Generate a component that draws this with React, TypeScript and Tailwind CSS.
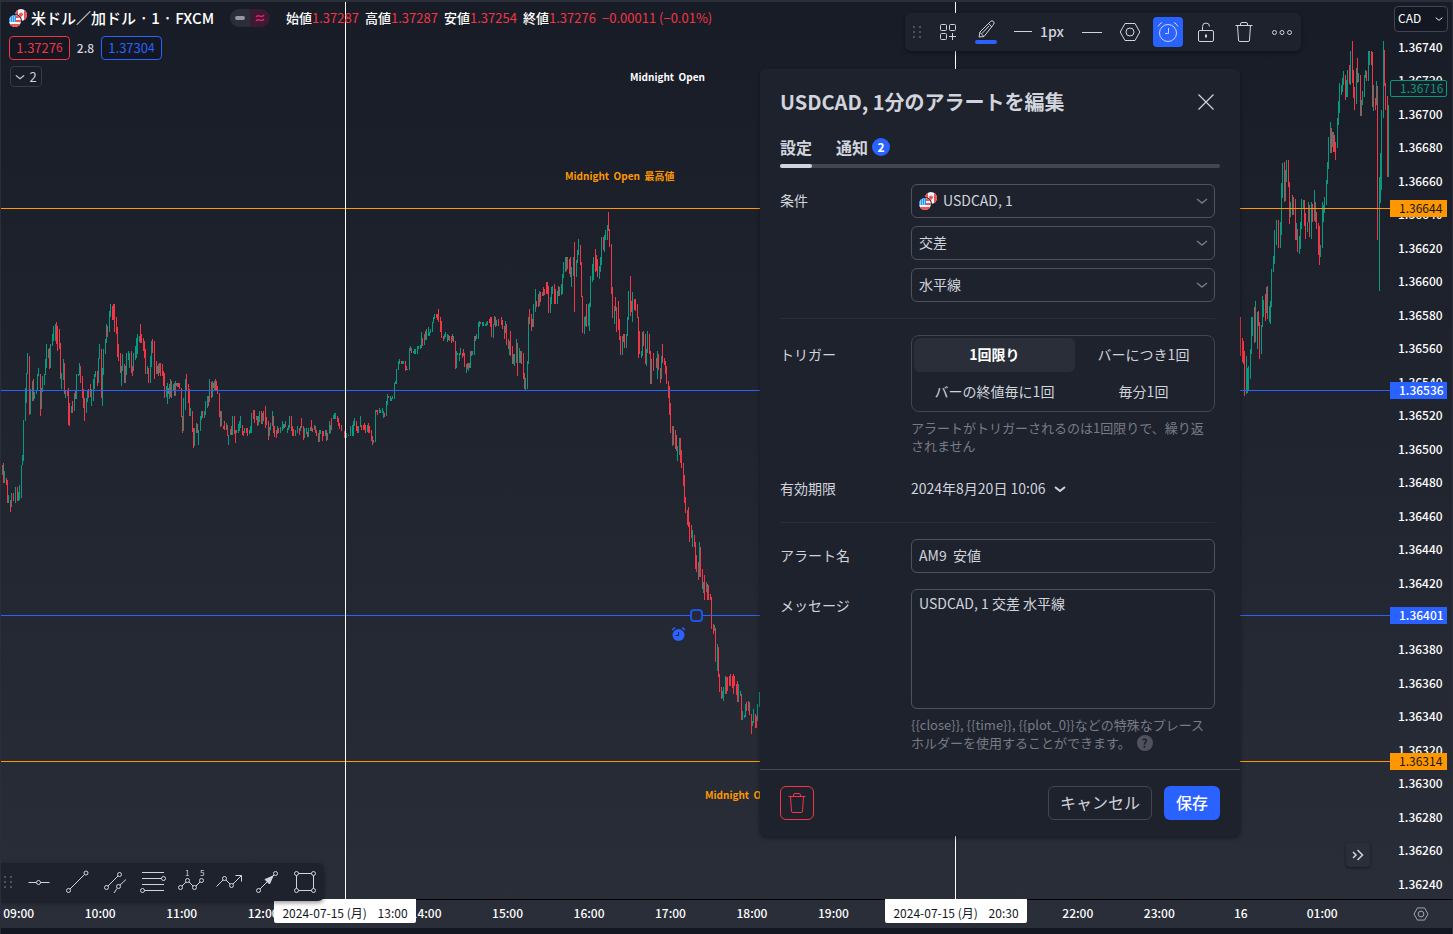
import { useState, type ReactNode } from "react";

// [x, high, low] of each one-minute bar
type Bar = [number, number, number];

const parseBars = (src: string): Bar[] =>
  src.trim().split(/\s+/).map((b) => b.split(",").map(Number) as Bar);

const UP_BARS = parseBars(`
2,465,475 4,471,483 8,495,503 11,493,507 15,487,503 18,492,501 19,485,500 21,465,498 22,455,465 23,420,461 25,388,421 26,373,403 27,353,374
30,389,414 32,381,401 34,392,399 36,390,394 37,374,391 38,368,376 41,388,409 42,376,392 44,374,385 45,359,375 46,344,368 48,349,358 50,344,368
52,334,346 53,326,341 55,324,341 61,373,389 63,359,380 65,391,398 71,406,413 74,393,411 76,374,399 78,374,376 79,363,375 86,398,413 87,391,402
91,389,406 93,379,401 94,374,389 95,371,377 98,358,383 99,344,359 102,368,406 103,349,375 105,339,354 106,324,343 109,311,332 110,304,317
121,366,386 122,354,371 125,366,383 126,353,375 128,351,360 129,353,368 133,353,371 135,346,360 136,338,358 137,334,354 139,336,342 147,366,374
150,356,383 151,341,367 157,366,374 159,363,373 166,386,397 167,383,404 169,384,399 170,379,397 173,384,390 175,381,396 177,383,387 183,398,431
185,379,410 190,408,416 194,428,446 196,423,433 198,430,445 200,416,431 201,411,420 204,411,418 205,401,415 207,396,408 209,379,402 212,381,397
214,381,390 221,411,426 226,423,430 228,435,445 230,429,435 232,416,435 236,430,433 238,424,433 239,421,431 240,416,428 244,428,433 249,430,434
250,426,433 251,413,433 256,416,420 258,416,425 259,411,422 262,413,424 269,427,436 270,423,430 272,411,426 277,426,434 280,427,433 282,421,431
283,424,429 285,421,427 287,428,433 288,425,430 289,416,428 295,430,436 297,426,433 300,426,431 304,428,438 306,428,434 308,428,437 310,427,431
314,425,430 319,430,442 320,430,434 325,430,436 327,433,440 329,421,434 330,425,433 333,415,419 334,413,419 335,413,419 345,435,438 346,433,438
348,435,436 350,426,436 352,425,436 353,421,436 354,418,426 358,426,433 360,416,427 367,425,432 373,440,443 375,410,442 379,408,413 380,410,413
382,408,413 383,411,418 386,401,416 387,394,405 390,396,401 391,398,401 392,396,399 394,383,399 395,381,384 396,369,384 398,361,370 399,359,364
402,361,364 403,361,364 407,369,370 409,348,370 410,346,351 413,351,353 414,349,354 415,349,354 417,346,354 418,346,349 420,345,349 421,332,348
424,334,345 426,329,340 428,327,336 429,332,336 430,329,333 432,322,332 433,317,323 434,314,319 444,334,339 445,332,337 447,334,342 449,336,341
452,334,341 456,351,368 457,353,355 459,353,361 460,348,355 466,364,373 468,363,371 470,351,368 472,351,355 474,336,355 476,334,339 478,322,339
479,321,327 482,322,326 483,322,326 485,324,326 486,322,326 487,321,325 493,324,338 494,316,325 496,320,326 505,321,333 509,341,355 513,354,364
514,354,366 516,339,363 519,348,363 520,351,363 525,378,390 527,361,389 528,317,364 533,304,327 535,289,312 539,291,306 542,292,296 550,297,313
551,287,304 552,286,294 557,291,304 559,287,296 561,284,295 562,274,294 563,262,278 565,257,272 567,257,269 571,267,287 573,257,276 576,260,277
577,250,263 578,239,255 584,317,334 585,316,326 588,304,326 589,303,331 590,276,307 592,264,282 593,257,280 599,266,279 600,257,272 601,237,265
604,235,252 605,230,240 607,225,240 614,306,324 622,336,355 626,334,348 627,317,336 628,291,320 632,292,322 641,351,358 642,332,356 646,349,366
647,331,353 651,359,384 657,351,379 661,356,379 672,426,446 677,446,461 679,438,455 692,530,547 699,542,577 703,582,593 706,582,592 714,625,631
717,644,671 722,691,698 723,687,701 725,676,694 738,684,702 740,691,696 742,711,720 744,715,718 745,704,717 748,701,711 752,721,726 753,709,723
757,704,721 759,692,707
1246,356,394 1247,368,393 1248,366,390 1250,349,379 1251,317,354 1252,317,336 1255,301,342 1257,312,349 1261,325,354 1262,296,327 1263,300,317
1266,287,313 1269,306,322 1270,301,324 1271,269,307 1273,256,272 1274,230,264 1276,220,245 1280,222,248 1281,183,235 1282,163,198 1285,170,201
1286,160,182 1290,202,217 1293,197,215 1296,223,240 1299,236,254 1300,222,249 1301,199,229 1303,200,209 1307,222,232 1308,202,222 1311,202,239
1314,190,221 1320,245,257 1322,202,248 1323,205,222 1324,197,213 1326,180,205 1327,162,184 1328,137,169 1330,122,153 1332,132,147 1337,118,148
1338,101,125 1339,83,113 1341,85,95 1342,78,92 1343,71,85 1346,80,97 1347,70,97 1350,51,85 1356,68,104 1358,73,82 1361,100,116 1362,91,105
1364,75,97 1365,70,78 1368,51,81 1369,51,65 1373,85,111 1376,81,105 1379,177,291 1380,153,203 1381,110,190 1383,41,118 1388,105,177`);

const DOWN_BARS = parseBars(`
3,463,483 6,478,485 7,480,503 10,500,512 13,493,501 17,487,501 29,356,415 33,379,401 40,374,416 49,348,369 56,322,344 57,326,351 59,329,349
60,343,379 64,363,394 67,391,396 68,388,425 69,403,426 72,401,413 75,391,399 80,366,383 82,376,398 83,389,408 84,398,421 88,389,398 90,384,397
97,371,386 101,349,398 107,326,337 112,306,320 113,304,320 114,304,332 116,317,334 117,327,357 118,344,361 120,353,373 124,364,383 131,351,373
132,366,376 140,324,343 141,334,343 143,338,351 144,341,358 145,349,374 148,368,383 152,339,353 154,341,379 156,361,374 158,364,376 160,363,376
162,364,376 163,371,386 164,373,398 168,388,394 171,381,398 174,383,396 176,383,386 178,383,387 179,383,389 181,388,417 182,416,433 186,374,391
188,384,403 189,389,416 192,411,432 193,428,448 197,424,433 202,411,418 208,396,406 211,382,398 213,383,388 215,379,391 216,381,391 217,386,394
219,393,417 220,411,427 223,426,429 224,421,430 227,425,436 231,426,435 234,416,434 235,430,443 242,425,435 243,431,436 246,428,433 247,428,436
253,410,419 254,410,423 257,416,426 261,411,424 263,411,421 265,406,428 266,417,425 268,421,440 273,416,433 274,426,437 276,430,438 278,428,433
284,424,428 291,416,431 292,426,436 293,429,436 299,428,435 301,418,428 303,426,440 307,432,437 311,420,431 312,428,432 315,426,433 316,430,436
318,433,442 322,431,441 323,431,436 326,430,441 331,418,430 337,416,422 338,418,426 339,423,429 341,425,431 344,431,438 356,421,431 357,426,433
361,425,430 363,425,430 364,423,430 365,425,433 368,423,433 369,426,433 371,430,441 372,436,445 376,410,412 377,410,415 384,413,417 388,396,398
401,361,364 405,361,371 406,366,370 411,348,353 422,338,346 425,331,340 436,314,318 437,314,320 438,309,322 440,317,332 441,321,338 443,336,341
448,335,340 451,336,343 453,336,342 455,341,369 462,353,358 463,349,356 464,353,367 467,363,369 469,363,368 471,351,356 475,336,341 480,322,324
489,319,323 490,317,327 491,317,337 495,317,327 498,319,326 501,317,325 502,320,329 504,326,339 506,324,345 508,339,349 510,331,356 512,346,364
517,343,376 521,351,364 523,353,379 524,373,389 529,309,324 531,314,331 532,319,327 536,301,307 538,294,307 540,292,302 543,287,296 544,289,295
546,282,294 547,282,294 548,286,313 554,284,304 555,289,304 558,286,296 566,257,271 569,259,274 570,257,277 574,242,312 580,245,265 581,262,297
582,296,333 586,304,327 595,249,272 596,255,271 597,259,277 603,237,250 608,212,231 609,229,247 611,244,294 612,287,318 615,297,311 616,307,332
618,301,330 619,319,340 620,336,355 623,334,342 624,334,348 630,276,316 631,301,312 634,299,310 635,299,311 637,304,318 638,317,358 639,331,354
643,331,346 645,334,364 649,334,354 650,351,384 653,353,371 656,358,368 658,354,370 660,368,383 662,344,363 664,358,365 665,361,374 666,366,384
668,381,398 669,386,415 670,403,433 673,426,445 675,430,449 676,435,451 680,438,463 681,450,468 683,463,486 684,475,503 685,497,513 687,510,525
688,507,527 689,522,542 691,525,538 694,535,547 695,542,569 696,555,572 698,562,580 700,547,577 702,569,589 704,575,600 707,584,600 708,585,600
710,594,600 711,597,629 713,624,634 715,628,662 718,647,677 719,674,692 721,687,699 726,677,694 727,677,691 729,676,686 730,674,686 732,676,688
733,674,694 734,676,686 736,684,695 737,681,702 741,694,720 746,702,711 749,702,715 751,714,734 755,714,728 756,716,728
1240,317,356 1242,338,362 1243,341,364 1244,351,396 1254,307,343 1258,311,326 1259,322,359 1265,294,321 1267,286,319 1278,220,248 1284,162,202
1288,160,187 1289,182,224 1292,195,215 1295,199,240 1297,229,252 1304,200,226 1305,213,239 1309,205,237 1312,204,222 1315,202,222 1316,212,229
1318,223,255 1319,226,265 1331,128,153 1333,132,152 1334,135,152 1335,142,160 1345,75,100 1349,65,84 1352,41,83 1353,70,98 1354,87,110 1357,58,83
1360,75,116 1366,71,81 1371,51,65 1372,52,107 1375,98,110 1377,86,240 1384,50,86 1385,83,110 1387,96,177`);

const barPath = (bars: Bar[]) => bars.map(([x, hi, lo]) => `M${x + 0.5} ${hi}V${lo}`).join("");

const PRICES = Array.from({ length: 26 }, (_, i) => (1.3674 - i * 0.0002).toFixed(5));

const TIMES = [
  "09:00", "10:00", "11:00", "12:00", "13:00", "14:00", "15:00", "16:00", "17:00",
  "18:00", "19:00", "20:00", "21:00", "22:00", "23:00", "16", "01:00",
];

const OHLC = [
  { label: "始値", value: "1.37287" },
  { label: "高値", value: "1.37287" },
  { label: "安値", value: "1.37254" },
  { label: "終値", value: "1.37276" },
];

const TRIGGERS = ["1回限り", "バーにつき1回", "バーの終値毎に1回", "毎分1回"];

function Icon({ children, size = 28 }: { children: ReactNode; size?: number }) {
  return (
    <svg width={size} height={size} viewBox="0 0 28 28" fill="none" stroke="currentColor" aria-hidden="true" className="shrink-0 overflow-visible">
      {children}
    </svg>
  );
}

function Chevron({ className }: { className?: string }) {
  return (
    <svg width="12" height="8" viewBox="0 0 12 8" fill="none" stroke="currentColor" strokeWidth="1.400" aria-hidden="true" className={className}>
      <path d="M1 2l5 4 5-4" />
    </svg>
  );
}

function Flags() {
  return (
    <svg width="18" height="18" viewBox="0 0 18 18" aria-hidden="true" className="shrink-0">
      <defs>
        <clipPath id="ca"><circle cx="12" cy="6" r="6" /></clipPath>
        <clipPath id="us"><circle cx="6" cy="12" r="6" /></clipPath>
      </defs>
      <g clipPath="url(#ca)">
        <rect x="6" width="12" height="12" fill="#f0f3fa" />
        <path d="M6 0h3v12H6zM15 0h3v12h-3z" fill="#ef5350" />
        <path d="M12 3l1 1.500 1.200-.3-.4 2L12 8l-1.800-1.800-.4-2 1.200.3z" fill="#ef5350" />
      </g>
      <circle cx="6" cy="12" r="7" fill="#1e222d" />
      <g clipPath="url(#us)">
        <rect y="6" width="12" height="12" fill="#f0f3fa" />
        <path d="M0 7h12v2H0zM0 11h12v2H0zM0 15h12v3H0z" fill="#ef5350" />
        <rect y="6" width="7" height="7" fill="#2196f3" />
        <path d="M1 8h1M3 8h1M5 8h1M1 10h1M3 10h1M5 10h1M1 12h1M3 12h1M5 12h1" stroke="#fff" />
      </g>
    </svg>
  );
}

function TrashIcon() {
  return (
    <Icon>
      <path d="M5.500 7.500h17M10.500 7.500V6a1.500 1.500 0 0 1 1.500-1.500h4A1.500 1.500 0 0 1 17.500 6v1.500M7.500 7.500l1 14.500a1.500 1.500 0 0 0 1.500 1.500h8a1.500 1.500 0 0 0 1.500-1.500l1-14.500" />
    </Icon>
  );
}

function Grip() {
  return (
    <svg width="10" height="14" viewBox="0 0 10 14" fill="#50535e" aria-hidden="true">
      <path d="M1 1h2v2H1zM7 1h2v2H7zM1 6h2v2H1zM7 6h2v2H7zM1 11h2v2H1zM7 11h2v2H7z" />
    </svg>
  );
}

function HexIcon({ size }: { size?: number }) {
  return (
    <Icon size={size}>
      <path d="M9 5.500h10l4.800 8.500-4.800 8.500H9L4.200 14z" />
      <circle cx="14" cy="14" r="4" />
    </Icon>
  );
}

const TOOLS: { label: string; icon: ReactNode }[] = [
  { label: "水平線", icon: <><path d="M3.500 14.500h8M15.500 14.500h9" /><circle cx="13.500" cy="14.500" r="2" /></> },
  { label: "トレンドライン", icon: <><path d="M7 21L21.500 6.500" /><circle cx="5.500" cy="22.500" r="2" /><circle cx="23" cy="5" r="2" /></> },
  {
    label: "平行チャネル",
    icon: <><path d="M7 18L17 8M13 25l3-4.500M19 17l6-5.500" /><circle cx="5.500" cy="19.500" r="2" /><circle cx="18.500" cy="6.500" r="2" /><circle cx="17.500" cy="18.500" r="2" /></>,
  },
  {
    label: "フィボナッチ",
    icon: <><path d="M3 4.500h22M3 10.500h19.500M3 16.500h22M5.500 22.500H25" /><circle cx="24.500" cy="10.500" r="2" /><circle cx="3.500" cy="22.500" r="2" /></>,
  },
  {
    label: "エリオット波動",
    icon: (
      <>
        <path d="M5 18l4-4M12 14l4 4M19 18l4-4" />
        <circle cx="3.500" cy="19.500" r="2" /><circle cx="10.500" cy="12.500" r="2" /><circle cx="17.500" cy="19.500" r="2" /><circle cx="24.500" cy="12.500" r="2" />
        <text x="8" y="8" fontSize="8" fill="currentColor" stroke="none">1</text>
        <text x="23" y="8" fontSize="8" fill="currentColor" stroke="none">5</text>
      </>
    ),
  },
  {
    label: "パス",
    icon: <><path d="M1.500 18.500L8 12M11 12l4 4M18 16l8.500-8.500M20.500 7.500h6v6" /><circle cx="9.500" cy="10.500" r="2" /><circle cx="16.500" cy="17.500" r="2" /></>,
  },
  {
    label: "矢印",
    icon: <><path d="M7 21l8-8M19 9l2-2" /><path d="M20 8l-8 3.500 4.500 4.500z" fill="currentColor" /><circle cx="5.500" cy="22.500" r="2" /><circle cx="22.500" cy="5.500" r="2" /></>,
  },
  {
    label: "長方形",
    icon: (
      <>
        <path d="M7.500 5.500h13M7.500 22.500h13M5.500 7.500v13M22.500 7.500v13" />
        <circle cx="5.500" cy="5.500" r="2" /><circle cx="22.500" cy="5.500" r="2" /><circle cx="5.500" cy="22.500" r="2" /><circle cx="22.500" cy="22.500" r="2" />
      </>
    ),
  },
];

function ChartCanvas() {
  return (
    <svg className="absolute inset-0 h-full w-full" aria-hidden="true">
      <g transform="translate(-1 -2)" shapeRendering="crispEdges" fill="none">
        <path d={barPath(UP_BARS)} stroke="#089981" />
        <path d={barPath(DOWN_BARS)} stroke="#f23645" />
        <path d="M0 208.500H1390M0 761.500H1390" stroke="#ff9800" />
        <path d="M0 390.500H1390M0 615.500H1390" stroke="#2962ff" />
        <path d="M345.500 0V900M955.500 0V900" stroke="#ffffff" />
      </g>
      <g transform="translate(-1 -2)" className="text-[10px] font-bold">
        <text x="630" y="81" fill="#ffffff" className="whitespace-pre">Midnight  Open</text>
        <text x="565" y="180" fill="#ff9800" className="whitespace-pre">Midnight  Open  最高値</text>
        <text x="705" y="799" fill="#ff9800" className="whitespace-pre">Midnight  Open  最安値</text>
        <rect x="691" y="610" width="11" height="11" rx="3" fill="#262a35" stroke="#1e53e5" strokeWidth="2" />
        <circle cx="678.500" cy="635" r="6" fill="#2962ff" />
        <path d="M672 630l3-2.500M685 630l-3-2.500" stroke="#2962ff" strokeWidth="1.500" />
        <path d="M678.500 632v3.500h-3" fill="none" stroke="#1e222d" />
      </g>
    </svg>
  );
}

function Legend() {
  return (
    <div className="relative ml-2 flex flex-col items-start pt-1">
      <div className="flex h-[26px] items-center whitespace-nowrap pb-[2px]">
        <Flags />
        <h1 className="ml-1 w-[184px] text-[15px] font-medium text-white">米ドル／加ドル · 1 · FXCM</h1>
        <div className="ml-[15px] flex h-[18px] w-10 overflow-hidden rounded-full">
          <span className="flex flex-1 items-center justify-center bg-[#2a2e39]">
            <span className="h-1 w-[10px] rounded-full bg-[#9598a1]" />
          </span>
          <span className="flex flex-1 items-center justify-center bg-[#3b1a33] text-[#e91e63]">
            <svg width="10" height="8" viewBox="0 0 10 8" fill="none" stroke="currentColor" strokeWidth="1.500" aria-hidden="true">
              <path d="M1 3q2-2 4-.8T9 1M1 7q2-2 4-.8T9 5" />
            </svg>
          </span>
        </div>
        <dl className="ml-4 flex text-[13px]">
          {OHLC.map(({ label, value }) => (
            <div key={label} className="flex w-[79px]">
              <dt className="font-medium text-white">{label}</dt>
              <dd className="text-[#f23645]">{value}</dd>
            </div>
          ))}
        </dl>
        <span className="text-[13px] text-[#f23645]">−0.00011 (−0.01%)</span>
      </div>
      <div className="mt-1 flex h-6 items-center text-[13px]">
        <button type="button" className="h-6 w-[61px] rounded border border-[#f23645] bg-[#131722] leading-5 text-[#f23645]">
          1.3727<span className="relative -top-px text-[12px]">6</span>
        </button>
        <span className="w-[31px] text-center text-[12px] font-medium text-[#d1d4dc]">2.8</span>
        <button type="button" className="h-6 w-[61px] rounded border border-[#2962ff] bg-[#131722] leading-5 text-[#2962ff]">
          1.3730<span className="relative -top-px text-[12px]">4</span>
        </button>
      </div>
      <button type="button" className="ml-px mt-[6px] flex h-[21px] w-8 items-center justify-center gap-1 rounded-sm border border-[#363a45] text-[13px] text-[#d1d4dc]">
        <Chevron className="w-[10px]" />2
      </button>
    </div>
  );
}

function LineToolbar() {
  const btn = "flex h-[30px] w-[38px] items-center justify-center";
  return (
    <div className="absolute left-[904px] top-[11px] flex h-[38px] items-center rounded-md bg-[#1e222d] text-[#d1d4dc] shadow-[0_2px_4px_rgba(0,0,0,0.4)]">
      <span className="flex w-6 justify-center"><Grip /></span>
      <button type="button" aria-label="テンプレート" className={btn}>
        <Icon>
          <rect x="6.500" y="6.500" width="6" height="6" rx="1" /><rect x="15.500" y="6.500" width="6" height="6" rx="1" />
          <rect x="6.500" y="15.500" width="6" height="6" rx="1" /><path d="M18.500 15v7M15 18.500h7" />
        </Icon>
      </button>
      <button type="button" aria-label="線の色" className="flex h-[30px] w-[38px] flex-col items-center justify-center">
        <svg width="20" height="20" viewBox="0 0 20 20" fill="none" stroke="currentColor" aria-hidden="true">
          <path d="M3 17l1-5L14.500 1.500a2 2 0 0 1 3 3L8 16.500l-5 .5zM4 12.500l3.500 3.500M12.500 3.500L16 7M6 13.500l7-7.500" />
        </svg>
        <span className="h-1 w-[22px] rounded-full bg-[#2962ff]" />
      </button>
      <button type="button" className="flex h-[30px] w-[68px] items-center justify-center gap-2 pb-[2px] text-[14px] font-medium">
        <span className="h-px w-[18px] bg-current" />1px
      </button>
      <button type="button" aria-label="線のスタイル" className={btn}><span className="h-px w-5 bg-current" /></button>
      <button type="button" aria-label="設定" className={btn}><HexIcon /></button>
      <button type="button" aria-label="アラート" className={btn}>
        <span className="flex h-[30px] w-[30px] items-center justify-center rounded bg-[#2962ff]">
          <Icon>
            <circle cx="14" cy="15" r="8.500" />
            <path d="M14.500 10v5.500H11M4 8.500a9 9 0 0 1 4-4M24 8.500a9 9 0 0 0-4-4" />
          </Icon>
        </span>
      </button>
      <button type="button" aria-label="ロック" className={btn}>
        <Icon>
          <rect x="6.500" y="12.500" width="15" height="11" rx="1.500" />
          <path d="M10.500 12.500V8.500a3.500 3.500 0 0 1 7 0" /><path d="M14 16.500v3" strokeWidth="2" />
        </Icon>
      </button>
      <button type="button" aria-label="削除" className={btn}><TrashIcon /></button>
      <button type="button" aria-label="その他" className={btn}>
        <Icon><circle cx="6.500" cy="14.500" r="2" /><circle cx="14" cy="14.500" r="2" /><circle cx="21.500" cy="14.500" r="2" /></Icon>
      </button>
    </div>
  );
}

function DrawingToolbar() {
  return (
    <div className="absolute -bottom-[2px] -left-px z-20 flex h-[38px] items-center rounded-r-md bg-[#1e222d] text-[#d1d4dc] shadow-[0_2px_4px_rgba(0,0,0,0.4)]">
      <span className="flex w-5 pl-[3px]"><Grip /></span>
      {TOOLS.map(({ label, icon }) => (
        <button key={label} type="button" aria-label={label} className="flex h-[30px] w-[38px] items-center justify-center">
          <Icon>{icon}</Icon>
        </button>
      ))}
    </div>
  );
}

function SelectBox({ label, value, icon }: { label: string; value: string; icon?: ReactNode }) {
  return (
    <div className="flex h-[34px] items-center rounded-md border border-[#50535e] pl-[7px]">
      {icon && <span className="mr-[6px]">{icon}</span>}
      <select aria-label={label} className="h-full min-w-0 flex-1 appearance-none bg-transparent pb-[2px] text-[14px] outline-none">
        <option>{value}</option>
      </select>
      <Chevron className="mr-[6px] shrink-0 text-[#787b86]" />
    </div>
  );
}

function AlertDialog() {
  const [trigger, setTrigger] = useState(TRIGGERS[0]);
  const [name, setName] = useState("AM9  安値");
  const [message, setMessage] = useState("USDCAD, 1 交差 水平線");

  return (
    <section
      role="dialog"
      aria-labelledby="alert-title"
      className="absolute left-[759px] top-[67px] z-10 w-[480px] rounded-md bg-[#1e222d] text-[14px] text-[#d1d4dc] shadow-[0_2px_4px_rgba(0,0,0,0.4)]"
    >
      <header className="flex h-[66px] items-center justify-between px-5">
        <h2 id="alert-title" className="text-[20px] font-bold">USDCAD, 1分のアラートを編集</h2>
        <button type="button" aria-label="閉じる">
          <Icon><path d="M6.500 6.500l15 15M21.500 6.500l-15 15" strokeWidth="1.200" /></Icon>
        </button>
      </header>

      <div className="px-5">
        <div role="tablist" className="flex h-[29px] gap-6 text-[16px] font-bold">
          <button type="button" role="tab" aria-selected="true" className="h-6 pb-[2px]">設定</button>
          <button type="button" role="tab" aria-selected="false" className="flex h-6 items-center gap-1 leading-[22px]">
            通知
            <span className="flex h-[18px] w-[18px] items-center justify-center rounded-full bg-[#2962ff] text-[12px] leading-4 text-white">2</span>
          </button>
        </div>
        <div className="h-1 rounded-full bg-[#434651]">
          <div className="h-1 w-8 rounded-full bg-[#d1d4dc]" />
        </div>
      </div>

      <form id="alert-form" onSubmit={(e) => e.preventDefault()} className="pl-5 pr-[25px] pt-4">
        <div className="grid grid-cols-[131px_1fr]">
          <span className="leading-8">条件</span>
          <div className="flex flex-col gap-2">
            <SelectBox label="銘柄" value="USDCAD, 1" icon={<Flags />} />
            <SelectBox label="条件" value="交差" />
            <SelectBox label="対象" value="水平線" />
          </div>
        </div>

        <hr className="my-4 border-[#2a2e39]" />

        <div className="grid grid-cols-[131px_1fr]">
          <span className="leading-[38px]">トリガー</span>
          <div>
            <div className="grid grid-cols-[161px_1fr] gap-y-[3px] rounded-lg border border-[#434651] p-[2px]">
              {TRIGGERS.map((t) => (
                <button
                  key={t}
                  type="button"
                  aria-pressed={t === trigger}
                  onClick={() => setTrigger(t)}
                  className={t === trigger ? "h-[34px] rounded-md bg-[#2a2e39] pb-[2px] font-bold text-white" : "h-[34px] rounded-md pb-[2px]"}
                >
                  {t}
                </button>
              ))}
            </div>
            <p className="mt-[7px] text-[13px] leading-[18px] text-[#787b86]">アラートがトリガーされるのは1回限りで、繰り返されません</p>
          </div>
          <span className="mt-4 leading-[34px]">有効期限</span>
          <button type="button" className="mt-4 flex h-[35px] items-center gap-2">
            2024年8月20日 10:06
            <Chevron className="stroke-2" />
          </button>
        </div>

        <hr className="my-4 border-[#2a2e39]" />

        <div className="grid grid-cols-[131px_1fr] gap-y-4">
          <label htmlFor="alert-name" className="leading-8">アラート名</label>
          <input
            id="alert-name"
            value={name}
            onChange={(e) => setName(e.target.value)}
            className="h-[34px] w-full rounded-md border border-[#50535e] bg-transparent px-[7px] pb-[2px] outline-none"
          />
          <label htmlFor="alert-message" className="leading-8">メッセージ</label>
          <div>
            <textarea
              id="alert-message"
              value={message}
              onChange={(e) => setMessage(e.target.value)}
              className="block h-[120px] w-full resize-none rounded-md border border-[#50535e] bg-transparent px-[7px] py-[3px] leading-5 outline-none"
            />
            <p className="mt-[7px] text-[13px] leading-[18px] text-[#787b86]">
              {"{{close}}, {{time}}, {{plot_0}}などの特殊なプレースホルダーを使用することができます。"}
              <button type="button" aria-label="ヘルプ" className="ml-[6px] inline-flex h-4 w-4 items-center justify-center rounded-full bg-[#50535e] text-[12px] font-bold leading-4 text-[#1e222d]">
                ?
              </button>
            </p>
          </div>
        </div>
      </form>

      <footer className="mt-[17px] flex items-center border-t border-[#434651] px-5 py-4 text-[16px]">
        <button type="button" aria-label="アラートを削除" className="flex h-[34px] w-[34px] items-center justify-center rounded-md border border-[#f23645] text-[#f23645]">
          <TrashIcon />
        </button>
        <button type="button" className="ml-auto h-[34px] w-[104px] rounded-md border border-[#434651] pb-[3px]">キャンセル</button>
        <button type="submit" form="alert-form" className="ml-3 h-[34px] w-14 rounded-md bg-[#2962ff] pb-[3px] font-medium text-white">保存</button>
      </footer>
    </section>
  );
}

function PriceAxis() {
  const tag = "absolute left-0 w-[57px] pl-[9px] text-[12px] h-[17px]";
  return (
    <aside className="relative flex w-[62px] shrink-0 flex-col text-[12px] text-white">
      <div className="ml-1 mt-1 flex h-[26px] w-[54px] shrink-0 items-center rounded border border-[#434651] bg-[#131722] pl-[3px]">
        <select aria-label="通貨" className="min-w-0 flex-1 appearance-none bg-transparent pb-[2px] outline-none">
          <option>CAD</option>
        </select>
        <Chevron className="mr-1 w-2 shrink-0" />
      </div>
      <ul className="mb-[7px] mt-[7px] flex flex-1 flex-col justify-between pl-2 font-medium">
        {PRICES.map((p) => (
          <li key={p} className="h-4 leading-4">{p}</li>
        ))}
      </ul>
      <span className={`${tag} top-[78px] rounded-xs border border-[#089981] bg-[#181c27] leading-[13px] text-[#089981]`}>1.36716</span>
      <span className={`${tag} top-[198px] bg-[#ff9800] leading-[15px] text-[#131722]`}>1.36644</span>
      <span className={`${tag} top-[380px] bg-[#2962ff] font-medium leading-[15px]`}>1.36536</span>
      <span className={`${tag} top-[605px] bg-[#2962ff] font-medium leading-[15px]`}>1.36401</span>
      <span className={`${tag} top-[751px] bg-[#ff9800] leading-[15px] text-[#131722]`}>1.36314</span>
    </aside>
  );
}

function TimeAxis() {
  const tag = "absolute -top-px flex h-6 w-[142px] items-center justify-center whitespace-pre rounded-b-xs bg-white pt-1 text-[12px] text-[#131722]";
  return (
    <div className="relative flex h-[29px] shrink-0 items-center border-t border-black">
      <ul className="-ml-[23px] mr-[27px] flex flex-1 pb-[3px] text-center text-[12px] font-medium text-white">
        {TIMES.map((t) => (
          <li key={t} className="w-0 flex-1">{t}</li>
        ))}
      </ul>
      <span className={`${tag} left-[273px]`}>2024-07-15 (月)    13:00</span>
      <span className={`${tag} left-[884px]`}>2024-07-15 (月)    20:30</span>
      <button type="button" aria-label="チャート設定" className="flex w-[62px] justify-center text-[#d1d4dc]"><HexIcon size={20} /></button>
    </div>
  );
}

export default function App() {
  return (
    <div className="flex h-screen min-h-[860px] flex-col overflow-hidden border-x border-t-2 border-[#2a2e39] bg-[#131722] font-['Noto_Sans_CJK_JP','Noto_Sans',sans-serif]">
      <div className="flex min-h-0 flex-1 flex-col bg-linear-to-b from-[#181c27] to-[#2a2e39]">
        <div className="flex min-h-0 flex-1">
          <main className="relative min-w-0 flex-1">
            <ChartCanvas />
            <Legend />
            <LineToolbar />
            <AlertDialog />
            <DrawingToolbar />
            <button type="button" aria-label="最新のバーへ" className="absolute bottom-8 right-5 flex h-6 w-6 items-center justify-center rounded bg-[#2a2e39] text-[#d1d4dc] shadow-[0_1px_3px_rgba(0,0,0,0.5)]">
              <svg width="12" height="12" viewBox="0 0 12 12" fill="none" stroke="currentColor" strokeWidth="1.500" aria-hidden="true">
                <path d="M1 3l3 3-3 3M5.500 1l5 5-5 5" />
              </svg>
            </button>
          </main>
          <PriceAxis />
        </div>
        <TimeAxis />
      </div>
      <div className="h-[6px] shrink-0" />
    </div>
  );
}
